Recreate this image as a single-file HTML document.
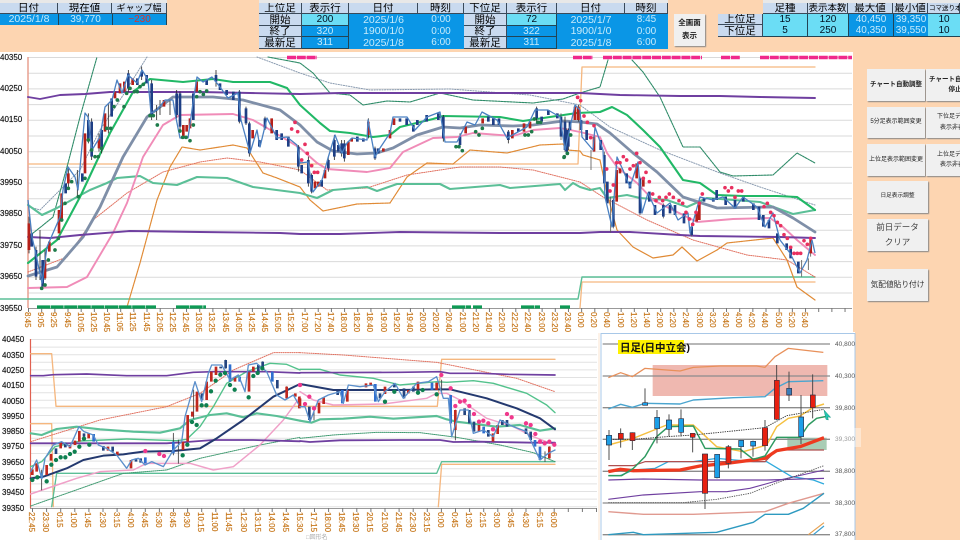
<!DOCTYPE html>
<html lang="ja"><head><meta charset="utf-8"><title>Chart</title>
<style>
html,body{margin:0;padding:0}
body{width:960px;height:540px;overflow:hidden;background:#FDD5B1;position:relative;font-family:"Liberation Sans","Noto Sans CJK JP",sans-serif}
#w{position:absolute;left:0;top:0;width:960px;height:540px;filter:blur(.35px)}
.c{position:absolute;text-align:center;box-sizing:border-box;white-space:nowrap;font-size:10px;overflow:hidden}
.h{background:#C9DAEF;color:#000;border:1px solid #3a4a5a;border-width:0 1px 1px 0;font-size:10.5px}
.b{background:#0A96E6;color:#C6EBFB}
.k{background:#6BDDF5;color:#012}
.d{font-size:10.5px}
.btn{position:absolute;background:#F0F0F0;box-shadow:1px 1px 1px #888;text-align:center;display:flex;align-items:center;justify-content:center;line-height:1.35;color:#222;box-sizing:border-box;overflow:hidden;white-space:nowrap}
svg{position:absolute;left:0;top:0}
svg text{font-family:"Liberation Sans",sans-serif}
</style></head><body><div id="w">

<div class="c" style="left:0;top:0;width:167px;height:3px;background:#E8E8E8"></div>
<div class="c" style="left:259px;top:0;width:409px;height:3px;background:#E8E8E8"></div>
<div class="c" style="left:763px;top:0;width:197px;height:3px;background:#E8E8E8"></div>

<div class="c h" style="left:0;top:3px;width:58px;height:11px;line-height:11px">日付</div>
<div class="c h" style="left:58px;top:3px;width:54px;height:11px;line-height:11px">現在値</div>
<div class="c h" style="left:112px;top:3px;width:55px;height:11px;line-height:11px;font-size:9px">ギャップ幅</div>
<div class="c b d" style="left:0;top:14px;width:58px;height:11px;line-height:11px">2025/1/8</div>
<div class="c b" style="left:58px;top:14px;width:54px;height:11px;line-height:11px;border-left:1px solid #245">39,770</div>
<div class="c b" style="left:112px;top:14px;width:55px;height:11px;line-height:11px;color:#D8322E;border-left:1px solid #245;border-right:1px solid #245">−230</div>

<div class="c h" style="left:259px;top:3px;width:43px;height:11px;line-height:11px">上位足</div>
<div class="c h" style="left:302px;top:3px;width:47px;height:11px;line-height:11px">表示行</div>
<div class="c h" style="left:349px;top:3px;width:69px;height:11px;line-height:11px">日付</div>
<div class="c h" style="left:418px;top:3px;width:46px;height:11px;line-height:11px">時刻</div>
<div class="c h" style="left:259px;top:14px;width:43px;height:12px;line-height:12px">開始</div>
<div class="c h" style="left:259px;top:26px;width:43px;height:11px;line-height:11px">終了</div>
<div class="c h" style="left:259px;top:37px;width:43px;height:12px;line-height:12px">最新足</div>
<div class="c k" style="left:302px;top:14px;width:47px;height:12px;line-height:12px;border-right:1px solid #245;border-bottom:1px solid #245">200</div>
<div class="c b" style="left:302px;top:26px;width:47px;height:11px;line-height:11px;border-right:1px solid #245;border-bottom:1px solid #245">320</div>
<div class="c b" style="left:302px;top:37px;width:47px;height:12px;line-height:12px;border-right:1px solid #245;border-bottom:1px solid #245">311</div>
<div class="c b d" style="left:349px;top:14px;width:69px;height:12px;line-height:12px">2025/1/6</div>
<div class="c b d" style="left:349px;top:26px;width:69px;height:11px;line-height:11px">1900/1/0</div>
<div class="c b d" style="left:349px;top:37px;width:69px;height:12px;line-height:12px">2025/1/8</div>
<div class="c b" style="left:418px;top:14px;width:46px;height:12px;line-height:12px">0:00</div>
<div class="c b" style="left:418px;top:26px;width:46px;height:11px;line-height:11px">0:00</div>
<div class="c b" style="left:418px;top:37px;width:46px;height:12px;line-height:12px">6:00</div>

<div class="c h" style="left:464px;top:3px;width:43px;height:11px;line-height:11px">下位足</div>
<div class="c h" style="left:507px;top:3px;width:50px;height:11px;line-height:11px">表示行</div>
<div class="c h" style="left:557px;top:3px;width:68px;height:11px;line-height:11px">日付</div>
<div class="c h" style="left:625px;top:3px;width:43px;height:11px;line-height:11px">時刻</div>
<div class="c h" style="left:464px;top:14px;width:43px;height:12px;line-height:12px">開始</div>
<div class="c h" style="left:464px;top:26px;width:43px;height:11px;line-height:11px">終了</div>
<div class="c h" style="left:464px;top:37px;width:43px;height:12px;line-height:12px">最新足</div>
<div class="c k" style="left:507px;top:14px;width:50px;height:12px;line-height:12px;border-right:1px solid #245;border-bottom:1px solid #245">72</div>
<div class="c b" style="left:507px;top:26px;width:50px;height:11px;line-height:11px;border-right:1px solid #245;border-bottom:1px solid #245">322</div>
<div class="c b" style="left:507px;top:37px;width:50px;height:12px;line-height:12px;border-right:1px solid #245;border-bottom:1px solid #245">311</div>
<div class="c b d" style="left:557px;top:14px;width:68px;height:12px;line-height:12px">2025/1/7</div>
<div class="c b d" style="left:557px;top:26px;width:68px;height:11px;line-height:11px">1900/1/0</div>
<div class="c b d" style="left:557px;top:37px;width:68px;height:12px;line-height:12px">2025/1/8</div>
<div class="c b" style="left:625px;top:14px;width:43px;height:12px;line-height:12px">8:45</div>
<div class="c b" style="left:625px;top:26px;width:43px;height:11px;line-height:11px">0:00</div>
<div class="c b" style="left:625px;top:37px;width:43px;height:12px;line-height:12px">6:00</div>

<div class="btn" style="left:674px;top:14px;width:31px;height:32px;font-size:7.5px;font-weight:bold;line-height:1.7">全画面<br>表示</div>

<div class="c h" style="left:763px;top:3px;width:45px;height:11px;line-height:11px">足種</div>
<div class="c h" style="left:808px;top:3px;width:40px;height:11px;line-height:11px;font-size:9.5px">表示本数</div>
<div class="c h" style="left:848px;top:3px;width:45px;height:11px;line-height:11px">最大値</div>
<div class="c h" style="left:893px;top:3px;width:35px;height:11px;line-height:11px">最小値</div>
<div class="c h" style="left:928px;top:3px;width:32px;height:11px;line-height:11px;font-size:6.5px;text-align:left;padding-left:1px">コマ送り本数</div>
<div class="c h" style="left:718px;top:14px;width:45px;height:11px;line-height:11px">上位足</div>
<div class="c h" style="left:718px;top:25px;width:45px;height:12px;line-height:12px">下位足</div>
<div class="c k" style="left:763px;top:14px;width:45px;height:11px;line-height:11px;border-right:1px solid #245">15</div>
<div class="c k" style="left:808px;top:14px;width:40px;height:11px;line-height:11px">120</div>
<div class="c b" style="left:848px;top:14px;width:45px;height:11px;line-height:11px;border-left:1px solid #245">40,450</div>
<div class="c b" style="left:893px;top:14px;width:35px;height:11px;line-height:11px;border-left:1px solid #245">39,350</div>
<div class="c k" style="left:928px;top:14px;width:32px;height:11px;line-height:11px">10</div>
<div class="c k" style="left:763px;top:25px;width:45px;height:12px;line-height:12px;border-right:1px solid #245;border-bottom:1px solid #245">5</div>
<div class="c k" style="left:808px;top:25px;width:40px;height:12px;line-height:12px;border-bottom:1px solid #245">250</div>
<div class="c b" style="left:848px;top:25px;width:45px;height:12px;line-height:12px;border-left:1px solid #245;border-bottom:1px solid #245">40,350</div>
<div class="c b" style="left:893px;top:25px;width:35px;height:12px;line-height:12px;border-left:1px solid #245;border-bottom:1px solid #245">39,550</div>
<div class="c k" style="left:928px;top:25px;width:32px;height:12px;line-height:12px;border-bottom:1px solid #245">10</div>

<div class="btn" style="left:867px;top:69px;width:58px;height:32px;font-size:6.5px;font-weight:bold">チャート自動調整</div>
<div class="btn" style="left:926px;top:69px;width:58px;height:32px;font-size:6.5px;font-weight:bold;line-height:1.6">チャート自動調整<br>停止</div>
<div class="btn" style="left:867px;top:107px;width:58px;height:31px;font-size:6px">5分足表示範囲変更</div>
<div class="btn" style="left:926px;top:107px;width:58px;height:31px;font-size:6px;line-height:1.7">下位足データ<br>表示非表示</div>
<div class="btn" style="left:867px;top:144px;width:58px;height:32px;font-size:6px">上位足表示範囲変更</div>
<div class="btn" style="left:926px;top:144px;width:58px;height:32px;font-size:6px;line-height:1.7">上位足データ<br>表示非表示</div>
<div class="btn" style="left:867px;top:181px;width:61px;height:32px;font-size:5.7px">日足表示調整</div>
<div class="btn" style="left:867px;top:219px;width:61px;height:32px;font-size:8.5px;line-height:1.75;color:#444">前日データ<br>クリア</div>
<div class="btn" style="left:867px;top:269px;width:61px;height:32px;font-size:7.7px;color:#333">気配値貼り付け</div>

<svg width="960" height="540" viewBox="0 0 960 540" xmlns="http://www.w3.org/2000/svg">
<rect x="0" y="52" width="853" height="280" fill="#fff"/>
<rect x="0" y="332" width="855" height="208" fill="#fff"/>
<rect x="598.5" y="333" width="1" height="207" fill="#FBE6D2"/>

<!-- top chart grid -->
<line x1="440" y1="57" x2="440" y2="309" stroke="#DADADA" stroke-width="824" stroke-dasharray="1 14.7"/>
<line x1="28" y1="57" x2="28" y2="308" stroke="#E8A090" stroke-width="1.5"/>
<line x1="28" y1="308.5" x2="852" y2="308.5" stroke="#999"/>
<line x1="28" y1="310" x2="852" y2="310" stroke="#777" stroke-width="4" stroke-dasharray="1 12.17"/>

<g font-size="8" fill="#111" stroke="#111" stroke-width=".15">
<text x="0" y="60">40350</text><text x="0" y="91">40250</text><text x="0" y="122">40150</text><text x="0" y="154">40050</text><text x="0" y="185">39950</text><text x="0" y="216">39850</text><text x="0" y="248">39750</text><text x="0" y="279">39650</text><text x="0" y="311">39550</text>
</g>

<g fill="none" stroke-linejoin="round" stroke-linecap="round">
<path d="M28 164H578L582 67H815" stroke="#F5B77F" stroke-width="1.3"/>
<path d="M580 308L582 282H815" stroke="#F5B77F" stroke-width="1.3"/>
<path d="M0 299H578L582 277H815" stroke="#5BBF97" stroke-width="1.4"/>
<polyline stroke="#8A9BB0" stroke-width="1" stroke-dasharray="1.2 1.4" points="30,207 40,210 60,190 80,170 100,130 120,100 147,57"/>
<polyline stroke="#8A9BB0" stroke-width="1" stroke-dasharray="1.2 1.4" points="257,57 300,73 330,83 370,90 450,89 530,95 580,105 610,127 660,150 720,173 760,187 815,205"/>
<polyline stroke="#2E8B68" stroke-width="1.1" stroke-dasharray="2 1" points="28,237 42,226 53,217 67,167 80,117 97,57"/>
<polyline stroke="#2E8B68" stroke-width="1.1" stroke-dasharray="2 1" points="268,57 300,63 313,73 330,93 350,95 363,105 387,101 410,102 440,93 473,100 533,103 563,99 580,93 600,87 608,60"/>
<polyline stroke="#2E8B68" stroke-width="1.1" stroke-dasharray="2 1" points="632,60 643,72 660,97 683,147 700,147 720,172 733,176 773,175 797,153 815,163"/>
<polyline stroke="#E0705F" stroke-width="1" stroke-dasharray="1 1.2" points="28,272 67,257 93,220 127,193 163,172 200,162 227,158 260,162 300,170 327,190 367,188 407,175 460,167 500,167 533,170 580,182 603,197 647,220 693,240 747,255 787,260 815,277"/>
<polyline stroke="#E08A35" stroke-width="1.2" stroke-dasharray="1.6 .8" points="127,307 140,263 157,200 170,167 182,147 200,150 233,145 247,148 263,173 277,178 300,187 310,200 323,211 357,204 390,203 407,177 427,163 453,164 470,150 507,153 540,145 563,144 567,150 580,151 583,155 600,160"/>
<polyline stroke="#E08A35" stroke-width="1.2" points="600,160 607,193 617,230 633,247 653,258 673,255 682,247 697,261 717,250"/>
<polyline stroke="#E08A35" stroke-width="1.2" stroke-dasharray="1.6 .8" points="717,250 727,243 773,238"/>
<polyline stroke="#E08A35" stroke-width="1.2" points="773,238 787,260 797,287 815,300"/>
<polyline stroke="#5BBF97" stroke-width="2.1" points="28,205 42,215 57,208 77,197 90,190 107,183 117,178 140,176 153,183 177,185 197,177 227,178 253,187 300,193 317,198 333,190 367,187 377,191 397,184 440,184 450,189 500,185 510,188 560,184 565,190 573,183 580,187 590,190 600,188 607,198 627,195 640,198 667,200 687,207 707,198 760,202 793,214 815,210"/>
<polyline stroke="#F08CB8" stroke-width="1.9" points="28,288 67,287 87,277 113,233 127,203 143,157 163,125 180,115 233,114 253,120 267,128 300,148 317,163 327,169 367,172 390,168 403,152 433,138 457,137 473,133 513,136 533,130 560,128 580,132 600,137 607,153 617,167 637,183 653,200 673,210 697,222 733,219 770,218 783,227 797,240 815,255"/>
<polyline stroke="#7F8FA8" stroke-width="2.8" points="28,276 57,267 83,237 100,207 123,157 147,117 173,97 213,97 243,100 280,110 300,125 317,142 333,151 357,154 377,153 393,148 417,135 443,127 460,128 480,125 513,126 533,125 563,121 580,122 597,124 610,133 633,153 657,172 683,197 717,208 773,207 793,218 815,232"/>
<polyline stroke="#21B866" stroke-width="2.1" points="28,263 57,240 80,197 110,133 133,92 150,79 183,82 213,79 233,82 270,82 287,88 300,105 320,123 330,131 350,133 373,137 390,135 400,127 433,119 443,116 500,117 523,121 550,117 577,113 600,112 612,107 627,115 643,130 660,147 683,180 700,183 717,195 743,196 777,196 797,197 815,210"/>
<polyline stroke="#6F3FA0" stroke-width="1.9" points="28,97 40,99 60,95 85,94 110,92 150,92 200,92 250,93 300,94 340,93 400,93 450,93 500,93 560,93 580,93 620,95 680,96 720,96 760,97 815,98"/>
<polyline stroke="#6F3FA0" stroke-width="1.9" points="28,237 50,238 80,235 130,231 200,232 280,233 300,234 340,234 400,232 500,233 580,233 600,232 630,232 680,235 700,236 780,237 815,238"/>
</g>

<!-- top chart candles -->
<g fill="none" transform="translate(0,50) scale(.33333)">
<path stroke="#222" stroke-width="2.4" d="M87 500V610M120 540V690M108 590V690M135 600V690M205 350V410M232 360V440M265 190V280M275 205V330M297 250V305M305 235V310M325 160V250M385 60V125M425 50V90M455 90V210M470 165V210M480 150V195M510 150V195M530 120V205M540 125V240M580 130V210M648 60V110M718 120V220M738 170V225M748 215V320M795 200V240M895 285V365"/>
<path stroke="#B5201A" stroke-width="8" d="M87 520V600M135 630V685M148 575V605M177 480V550M185 430V510M205 370V400M255 250V370M297 265V295M315 190V245M345 125V145M360 100V130M373 95V125M398 85V105M492 150V170M550 225V260M560 225V245M570 205V235M590 95V125M758 240V265M815 205V250"/>
<path stroke="#1E3F85" stroke-width="8" d="M95 550V590M108 600V680M128 630V710M197 400V430M247 370V395M265 210V270M275 215V320M305 240V300M335 145V200M385 70V115M412 85V105M425 65V80M440 75V100M455 100V195M530 130V195M540 130V230M580 130V210M620 90V105M648 75V95M660 100V120M680 120V135M700 125V150M718 125V215M738 175V220M748 220V310M778 270V290M795 205V235M830 240V270M845 250V270M865 260V290M895 290V350"/>
</g>
<g fill="none" transform="translate(300,50) scale(.33333)">
<path stroke="#222" stroke-width="2.4" d="M25 320V410M35 370V430M85 320V365M103 255V330M125 270V320M133 270V335M205 205V265M225 290V330M430 195V275M480 250V295M625 240V280M710 170V215M795 200V305M805 235V300M835 165V215"/>
<path stroke="#B5201A" stroke-width="8" d="M45 395V415M55 395V410M75 360V385M145 275V315M155 265V275M205 215V255M250 295V305M270 240V265M282 205V225M497 230V250M548 205V220M637 240V265M672 220V245M690 215V235M825 180V210M835 170V210"/>
<path stroke="#1E3F85" stroke-width="8" d="M5 345V370M25 330V400M35 375V425M65 390V410M85 330V355M103 270V320M115 285V305M125 280V310M133 280V325M172 260V275M190 265V275M225 295V325M235 295V310M300 205V215M320 205V225M340 225V245M352 210V225M380 195V215M415 190V210M430 200V265M480 260V285M565 200V215M580 205V225M597 205V225M625 245V270M655 235V245M710 175V205M725 200V215M745 180V195M772 190V205M795 215V300M805 240V290"/>
</g>
<g fill="none" transform="translate(560,50) scale(.33333)">
<path stroke="#555" stroke-width="2.4" d="M3 190V270M20 235V310M93 300V360M133 305V410M152 440V548M160 445V535M240 380V495M395 525V560M725 630V680M745 625V660M752 565V620M310 460V505"/>
<path stroke="#B5201A" stroke-width="8" d="M45 170V210M102 260V305M170 360V455M180 355V370M230 340V385M250 385V410M410 485V515M418 460V510M752 570V610"/>
<path stroke="#1E3F85" stroke-width="8" d="M3 200V260M20 240V305M30 215V240M63 210V240M80 240V270M122 270V300M133 315V400M142 395V460M160 450V530M200 370V400M210 395V415M240 385V490M268 425V455M285 465V495M310 465V500M330 465V490M345 465V495M372 490V520M395 530V555M432 445V455M460 445V455M470 420V450M497 440V465M525 450V475M550 440V455M580 460V480M597 470V510M610 495V530M627 510V535M652 550V580M680 580V600M692 590V625M715 635V670"/>
</g>
<polyline fill="none" stroke="#4A80C2" stroke-width="1.3" stroke-linejoin="round" points="28,200 32,237 35,250 42,283 47,247 50,240 60,217 63,190 68,167 75,177 78,190 85,113 88,117 92,150 100,137 105,107 112,100 117,80 122,93 128,75 137,83 142,70 148,80 151,113 157,110 165,100 173,100 175,113 180,138 188,138 193,103 197,77 203,82 212,77 220,87 228,98 238,93 241,120 250,153 257,130 260,147 267,118 277,138 287,137 297,145 300,163 308,162 313,192 322,180 328,158 335,135 342,153 347,143 352,138 367,140 368,120 375,157 380,148 390,133 393,117 407,117 415,130 427,117 440,112 445,142 457,142 467,122 475,125 482,112 497,120 507,138 527,127 535,110 548,110 560,117 565,150 575,105 580,110 582,137 593,150 595,127 603,150 605,197 612,227 617,157 623,170 630,187 638,162 642,213 648,193 657,213 670,203 678,220 688,213 690,233 700,197 713,200 723,197 735,208 743,197 757,207 765,227 773,213 780,240 790,253 800,273 807,260 812,240 815,253"/>

<!-- dots top chart -->
<g fill="none" stroke="#1E7B4A" stroke-linecap="round">
<path transform="translate(0,50) scale(.33333)" stroke-width="11" d="M125 715h0M135 705h0M145 630h0M165 600h0M175 565h0M185 510h0M195 460h0M205 415h0M215 395h0M235 440h0M255 385h0M265 270h0M275 300h0M285 320h0M295 320h0M305 295h0M320 235h0M332 235h0M342 170h0M352 150h0M372 170h0M380 130h0M390 115h0M403 125h0M412 125h0M420 110h0M430 103h0M450 197h0M460 197h0M472 225h0M540 243h0M548 262h0M558 262h0M570 272h0M580 225h0M590 140h0M600 125h0M610 133h0M620 123h0"/>
<path transform="translate(300,50) scale(.33333)" stroke-width="11" d="M468 290h0M477 290h0M487 302h0M527 245h0M537 255h0M547 235h0M675 255h0M685 255h0M695 245h0M703 207h0M713 217h0M722 217h0M792 322h0M802 310h0"/>
<path transform="translate(560,50) scale(.33333)" stroke-width="11" d="M13 320h0M22 310h0M32 255h0"/>
</g>
<g fill="none" stroke="#E8305F" stroke-linecap="round">
<path transform="translate(0,50) scale(.33333)" stroke-width="11" d="M885 217h0M875 237h0M893 245h0"/>
<path transform="translate(300,50) scale(.33333)" stroke-width="11" d="M15 283h0M22 310h0M5 330h0M35 347h0M43 367h0M53 367h0M833 142h0"/>
<path transform="translate(560,50) scale(.33333)" stroke-width="11" d="M53 142h0M62 152h0M72 198h0M82 217h0M102 227h0M92 263h0M140 357h0M150 423h0M160 405h0M170 338h0M180 338h0M190 320h0M200 330h0M210 357h0M220 347h0M230 310h0M240 338h0M250 385h0M258 367h0M268 395h0M278 432h0M288 452h0M298 442h0M308 452h0M318 442h0M328 432h0M340 442h0M357 452h0M368 460h0M378 487h0M388 507h0M398 523h0M408 487h0M418 460h0M427 432h0M495 413h0M505 423h0M515 413h0M525 442h0M535 423h0M545 423h0M612 470h0M622 460h0M632 487h0M642 497h0M652 517h0M662 527h0M672 554h0M682 565h0M692 592h0M702 610h0M712 610h0M722 610h0M732 572h0M742 583h0M752 565h0"/>
</g>

<!-- status marks -->
<path fill="none" stroke="#F0288C" stroke-width="3.4" stroke-dasharray="9 .8" d="M287 57.5H317M573 57.5H593M603 57.5H702M721 57.5H740M760 57.5H852"/>
<path fill="none" stroke="#0E9A55" stroke-width="3.2" stroke-dasharray="13 .6" d="M37 307H156M176 307H206M452 307H471M473 307H482M521 307H540M560 307H570"/>

<!-- top time labels -->
<g font-size="8" fill="#C87A20" stroke="#C87A20" stroke-width=".2">
<text transform="translate(25,312) rotate(90)">8:45</text><text transform="translate(38,312) rotate(90)">9:05</text><text transform="translate(51,312) rotate(90)">9:25</text><text transform="translate(65,312) rotate(90)">9:45</text><text transform="translate(78,312) rotate(90)">10:05</text><text transform="translate(91,312) rotate(90)">10:25</text><text transform="translate(104,312) rotate(90)">10:45</text><text transform="translate(117,312) rotate(90)">11:05</text><text transform="translate(130,312) rotate(90)">11:25</text><text transform="translate(144,312) rotate(90)">11:45</text><text transform="translate(157,312) rotate(90)">12:05</text><text transform="translate(170,312) rotate(90)">12:25</text><text transform="translate(183,312) rotate(90)">12:45</text><text transform="translate(196,312) rotate(90)">13:05</text><text transform="translate(209,312) rotate(90)">13:25</text><text transform="translate(223,312) rotate(90)">13:45</text><text transform="translate(236,312) rotate(90)">14:05</text><text transform="translate(249,312) rotate(90)">14:25</text><text transform="translate(262,312) rotate(90)">14:45</text><text transform="translate(275,312) rotate(90)">15:05</text><text transform="translate(288,312) rotate(90)">15:25</text><text transform="translate(302,312) rotate(90)">17:00</text><text transform="translate(315,312) rotate(90)">17:20</text><text transform="translate(328,312) rotate(90)">17:40</text><text transform="translate(341,312) rotate(90)">18:00</text><text transform="translate(354,312) rotate(90)">18:20</text><text transform="translate(367,312) rotate(90)">18:40</text><text transform="translate(381,312) rotate(90)">19:00</text><text transform="translate(394,312) rotate(90)">19:20</text><text transform="translate(407,312) rotate(90)">19:40</text><text transform="translate(420,312) rotate(90)">20:00</text><text transform="translate(433,312) rotate(90)">20:20</text><text transform="translate(446,312) rotate(90)">20:40</text><text transform="translate(460,312) rotate(90)">21:00</text><text transform="translate(473,312) rotate(90)">21:20</text><text transform="translate(486,312) rotate(90)">21:40</text><text transform="translate(499,312) rotate(90)">22:00</text><text transform="translate(512,312) rotate(90)">22:20</text><text transform="translate(525,312) rotate(90)">22:40</text><text transform="translate(539,312) rotate(90)">23:00</text><text transform="translate(552,312) rotate(90)">23:20</text><text transform="translate(565,312) rotate(90)">23:40</text><text transform="translate(578,312) rotate(90)">0:00</text><text transform="translate(591,312) rotate(90)">0:20</text><text transform="translate(604,312) rotate(90)">0:40</text><text transform="translate(618,312) rotate(90)">1:00</text><text transform="translate(631,312) rotate(90)">1:20</text><text transform="translate(644,312) rotate(90)">1:40</text><text transform="translate(657,312) rotate(90)">2:00</text><text transform="translate(670,312) rotate(90)">2:20</text><text transform="translate(683,312) rotate(90)">2:40</text><text transform="translate(697,312) rotate(90)">3:00</text><text transform="translate(710,312) rotate(90)">3:20</text><text transform="translate(723,312) rotate(90)">3:40</text><text transform="translate(736,312) rotate(90)">4:00</text><text transform="translate(749,312) rotate(90)">4:20</text><text transform="translate(762,312) rotate(90)">4:40</text><text transform="translate(776,312) rotate(90)">5:00</text><text transform="translate(789,312) rotate(90)">5:20</text><text transform="translate(802,312) rotate(90)">5:40</text>
</g>

<!-- lower chart -->
<line x1="314" y1="339" x2="314" y2="509" stroke="#E2E2E2" stroke-width="566" stroke-dasharray="1 6.6"/>
<line x1="30.5" y1="339" x2="30.5" y2="508" stroke="#E06050" stroke-width="1.2"/>
<line x1="30" y1="508.5" x2="597" y2="508.5" stroke="#999"/>
<line x1="32" y1="510" x2="597" y2="510" stroke="#777" stroke-width="4" stroke-dasharray="1 13.1"/>
<g font-size="8" fill="#111" stroke="#111" stroke-width=".15">
<text x="2" y="342">40450</text><text x="2" y="358">40350</text><text x="2" y="373">40250</text><text x="2" y="388">40150</text><text x="2" y="404">40050</text><text x="2" y="419">39950</text><text x="2" y="434">39850</text><text x="2" y="449">39750</text><text x="2" y="465">39650</text><text x="2" y="480">39550</text><text x="2" y="495">39450</text><text x="2" y="511">39350</text>
</g>
<g fill="none" stroke-linejoin="round" stroke-linecap="round" transform="translate(0,330) scale(.33333)">
<path stroke="#F5B77F" stroke-width="4" d="M92 71H155L168 229H900"/>
<path stroke="#F5B77F" stroke-width="4" d="M92 281H155L160 530"/>
<path stroke="#5BBF97" stroke-width="4" d="M155 530L170 430H900"/>
<polyline stroke="#3F9A70" stroke-width="3" stroke-dasharray="3 3" points="92,528 200,490 370,430 500,420 600,385 780,345 900,322"/>
<polyline stroke="#E0705F" stroke-width="3" stroke-dasharray="3 3.6" points="92,335 300,270 500,230 600,190 700,120 820,68 900,68"/>
<polyline stroke="#F0A0C8" stroke-width="4.4" points="92,492 180,462 230,445 300,425 400,420 440,400 570,400 640,420 700,410 780,345 850,270 890,215 900,200"/>
<polyline stroke="#5BBF97" stroke-width="6.4" points="92,310 125,315 170,297 230,290 300,298 400,305 480,308 540,295 570,270 630,255 680,250 730,262 770,250 830,258 900,272"/>
<polyline stroke="#53C28C" stroke-width="4.2" points="92,410 125,395 165,350 240,333 380,327 530,332 560,328 600,290 640,230 680,160 740,125 810,100 860,103 900,120"/>
<polyline stroke="#6F3FA0" stroke-width="5" points="92,137 130,137 160,134 260,132 380,137 500,137 580,127 640,125 800,125 900,129"/>
<polyline stroke="#6F3FA0" stroke-width="5.4" points="92,340 500,340 560,336 640,330 760,330 900,334"/>
<polyline stroke="#24396F" stroke-width="6" points="92,445 130,440 200,415 250,390 310,377 370,373 430,365 520,363 600,355 650,325 730,270 820,200 900,162"/>
<path stroke="#333" stroke-width="2.4" d="M125 420V480M520 310V375M535 330V400M581 180V265M677 90V115M788 95V120M860 170V205"/>
<path stroke="#C0281F" stroke-width="8" stroke-linecap="butt" d="M97 418V435M110 400V425M140 405V435M153 372V392M182 338V355M210 345V355M225 332V345M238 303V335M266 310V325M324 350V362M352 365V375M393 390V415M549 335V360M563 255V335M577 245V260M591 185V245M620 155V210M634 125V155M648 110V135M705 140V155M747 127V185M760 110V125M860 170V205M886 190V200M898 200V235"/>
<path stroke="#24457F" stroke-width="8" stroke-linecap="butt" d="M168 355V372M196 338V352M252 310V320M310 348V362M338 350V365M408 385V395M422 385V398M606 190V210M662 110V115M677 90V115M775 105V125M788 95V120M832 150V175"/>
<path stroke="#2F6FD0" stroke-width="8" stroke-linecap="butt" d="M125 430V445M281 312V335M436 382V400M520 335V370M690 103V155M719 140V155M817 125V155"/>
<polyline stroke="#5B8FCB" stroke-width="4" points="92,425 110,390 125,445 135,385 160,345 185,335 210,350 237,290 252,305 280,315 295,345 320,355 350,375 380,415 395,390 415,385 435,405 455,395 490,410 520,360 545,335 555,260 565,225 585,155 605,215 625,130 635,105 665,105 690,150 715,135 735,185 745,105 770,100 800,125 830,195 855,210 880,195 900,230"/>
<path stroke="#0E8050" stroke-width="13" d="M97 450h0M112 442h0M140 454h0M154 404h0M168 390h0M182 382h0M196 382h0M210 372h0M224 365h0M238 350h0M252 326h0M268 344h0M548 376h0M562 344h0M576 276h0M590 285h0M605 226h0M619 226h0M633 184h0M647 152h0M661 134h0M675 129h0M690 165h0M704 179h0M746 202h0M760 138h0M773 129h0M787 115h0"/>
<path stroke="#F0388C" stroke-width="13" d="M436 363h0M478 372h0M492 378h0M900 165h0"/>
</g>
<g fill="none" stroke-linejoin="round" stroke-linecap="round" transform="translate(300,330) scale(.33333)">
<path stroke="#F5B77F" stroke-width="4" d="M0 229H412L425 88H765"/>
<path stroke="#F5B77F" stroke-width="4" d="M415 530L425 403H765"/>
<path stroke="#5BBF97" stroke-width="4" d="M0 430H410L425 395H765"/>
<polyline stroke="#3F9A70" stroke-width="3" stroke-dasharray="3 3" points="0,325 100,315 230,307 360,308 470,322 600,345 700,368 765,395"/>
<polyline stroke="#E0705F" stroke-width="3" stroke-dasharray="3 3.6" points="0,68 130,75 410,97 650,145 765,185"/>
<polyline stroke="#F0A0C8" stroke-width="4.4" points="0,185 40,210 100,225 250,222 380,205 410,190 440,190 480,210 560,265 640,290 700,320 765,345"/>
<polyline stroke="#5BBF97" stroke-width="6.4" points="0,272 35,278 60,268 130,266 210,260 280,266 410,258 440,268 470,275 590,290 660,285 720,302 765,295"/>
<polyline stroke="#53C28C" stroke-width="4.2" points="0,118 60,118 120,135 220,145 300,165 410,155 440,157 520,152 580,160 680,190 740,225 765,248"/>
<polyline stroke="#6F3FA0" stroke-width="5" points="0,128 300,127 420,125 450,130 540,130 620,133 765,135"/>
<polyline stroke="#6F3FA0" stroke-width="5.4" points="0,333 30,336 120,331 300,330 420,330 460,336 540,335 700,338 765,338"/>
<polyline stroke="#24396F" stroke-width="6" points="0,162 100,180 200,180 300,180 400,178 450,178 560,205 650,235 720,265 765,298"/>
<path stroke="#333" stroke-width="2.4" d="M42 232V270M466 240V330M735 365V395M748 350V385M425 150V190"/>
<path stroke="#C0281F" stroke-width="8" stroke-linecap="butt" d="M0 205V230M57 218V250M71 203V222M142 180V215M198 160V172M212 158V168M255 170V192M325 180V190M354 155V178M410 158V180M466 240V300M537 285V305M579 310V335M593 285V312M748 350V385"/>
<path stroke="#24457F" stroke-width="8" stroke-linecap="butt" d="M28 230V270M113 183V195M240 190V205M283 160V172M312 175V205M340 170V185M494 235V255M508 240V280M522 275V305M565 300V320M607 270V285M621 270V290M678 295V312M692 305V330"/>
<path stroke="#2F6FD0" stroke-width="8" stroke-linecap="butt" d="M127 180V220M226 162V215M396 158V180M452 195V280M551 290V310M705 330V350M720 350V390"/>
<polyline stroke="#5B8FCB" stroke-width="4" points="0,230 15,230 30,275 55,210 85,195 120,185 130,220 145,165 180,170 220,165 235,215 255,185 285,160 310,205 350,160 385,155 410,140 430,205 445,205 455,320 480,240 505,240 520,310 550,300 580,320 600,270 640,290 680,305 720,390 745,370 765,360"/>
<path stroke="#0E8050" stroke-width="13" d="M255 215h0M283 185h0M354 188h0M368 180h0M410 193h0"/>
<path stroke="#F0388C" stroke-width="13" d="M0 165h0M15 222h0M28 200h0M42 235h0M424 135h0M452 175h0M466 228h0M480 215h0M494 212h0M508 228h0M522 252h0M537 275h0M550 272h0M565 280h0M579 298h0M621 252h0M635 262h0M678 280h0M692 285h0M706 312h0M720 335h0M734 340h0M748 335h0M763 344h0"/>
</g>
<g font-size="8" fill="#C87A20" stroke="#C87A20" stroke-width=".2">
<text transform="translate(29,512) rotate(90)">22:45</text><text transform="translate(43,512) rotate(90)">23:30</text><text transform="translate(57,512) rotate(90)">0:15</text><text transform="translate(71,512) rotate(90)">1:00</text><text transform="translate(85,512) rotate(90)">1:45</text><text transform="translate(100,512) rotate(90)">2:30</text><text transform="translate(114,512) rotate(90)">3:15</text><text transform="translate(128,512) rotate(90)">4:00</text><text transform="translate(142,512) rotate(90)">4:45</text><text transform="translate(156,512) rotate(90)">5:30</text><text transform="translate(170,512) rotate(90)">8:45</text><text transform="translate(184,512) rotate(90)">9:30</text><text transform="translate(198,512) rotate(90)">10:15</text><text transform="translate(212,512) rotate(90)">11:00</text><text transform="translate(226,512) rotate(90)">11:45</text><text transform="translate(241,512) rotate(90)">12:30</text><text transform="translate(255,512) rotate(90)">13:15</text><text transform="translate(269,512) rotate(90)">14:00</text><text transform="translate(283,512) rotate(90)">14:45</text><text transform="translate(297,512) rotate(90)">15:30</text><text transform="translate(311,512) rotate(90)">17:15</text><text transform="translate(325,512) rotate(90)">18:00</text><text transform="translate(339,512) rotate(90)">18:45</text><text transform="translate(353,512) rotate(90)">19:30</text><text transform="translate(367,512) rotate(90)">20:15</text><text transform="translate(382,512) rotate(90)">21:00</text><text transform="translate(396,512) rotate(90)">21:45</text><text transform="translate(410,512) rotate(90)">22:30</text><text transform="translate(424,512) rotate(90)">23:15</text><text transform="translate(438,512) rotate(90)">0:00</text><text transform="translate(452,512) rotate(90)">0:45</text><text transform="translate(466,512) rotate(90)">1:30</text><text transform="translate(480,512) rotate(90)">2:15</text><text transform="translate(494,512) rotate(90)">3:00</text><text transform="translate(508,512) rotate(90)">3:45</text><text transform="translate(523,512) rotate(90)">4:30</text><text transform="translate(537,512) rotate(90)">5:15</text><text transform="translate(551,512) rotate(90)">6:00</text>
</g>
<text x="306" y="539" font-size="6" fill="#aaa" style="font-family:'Liberation Sans','Noto Sans CJK JP',sans-serif">□図形名</text>

<!-- daily chart -->
<rect x="601" y="333.5" width="254" height="207" fill="#fff" stroke="#A8C8E8"/>
<g fill="none" stroke-linejoin="round" transform="translate(600,330) scale(.33333)">
<rect x="158" y="105" width="524" height="93" fill="#EFB8B0"/>
<rect x="562" y="323" width="118" height="37" fill="#A9CDB5"/>
<path stroke="#8C8C8C" stroke-width="4" d="M8 42H690M8 138H690M8 233H690M8 328H690M8 424H690M8 519H690M8 614H690"/>
<polyline stroke="#E8905A" stroke-width="3.8" points="25,143 62,128 97,140 135,115 240,123 280,112 360,108 470,108 495,112 525,80 565,55 670,67"/>
<polyline stroke="#4BA5CF" stroke-width="4.2" points="25,237 62,223 97,232 135,220 240,222 280,210 400,203 495,200 525,175 565,155 670,152"/>
<polyline stroke="#2FAADD" stroke-width="3.8" points="25,437 60,437 100,420 165,415 205,395 280,395 350,385 460,395 500,395 575,440 640,450 672,462"/>
<polyline stroke="#7040A0" stroke-width="3.8" points="25,450 130,447 300,450 500,450 672,445"/>
<polyline stroke="#7040A0" stroke-width="3.4" points="25,508 130,495 300,485 380,485 450,475 540,450 672,420"/>
<polyline stroke="#555" stroke-width="2.8" stroke-dasharray="4 3" points="25,518 250,518 350,508 450,490 540,455 672,407"/>
<polyline stroke="#E09A90" stroke-width="4.2" points="25,545 130,553 280,553 495,545 565,520 672,490"/>
<polyline stroke="#2E9AC0" stroke-width="4.2" points="25,614 100,607 130,614 350,607 460,577 495,553 565,553 610,535 672,490"/>
<path stroke="#E8A050" stroke-width="3.6" d="M625 614L672 578"/><path stroke="#3BA0D0" stroke-width="3.6" d="M640 614L672 588"/>
<polyline stroke="#B05050" stroke-width="3.8" points="25,407 100,407 135,395 495,395 510,380 530,360 600,360 672,360"/>
<polyline stroke="#EE3A20" stroke-width="10" points="25,425 60,418 100,422 240,420 300,408 380,400 495,385 530,362 600,350 672,323"/>
<polyline stroke="#F5C040" stroke-width="4.4" points="25,345 100,325 200,285 280,285 350,350 430,365 500,345 530,290 565,265 600,258 640,232 672,222"/>
<polyline stroke="#2E9A60" stroke-width="4.4" points="25,437 65,437 100,415 135,380 170,320 205,290 280,288 315,355 420,357 460,388 495,378 530,322 600,322 625,285 650,265 685,258"/>
<polyline stroke="#333" stroke-width="2.8" stroke-dasharray="4 3" points="25,328 100,328 200,320 280,315 350,308 495,293 560,257 672,238"/>
<path stroke="#444" stroke-width="2.8" d="M27 300V390M62 295V353M97 307V360M135 175V222M171 240V340M207 253V320M243 238V320M278 310V367M315 372V537M351 372V445M385 345V415M423 330V385M459 332V380M495 270V362M530 105V270M567 125V213M603 195V342M638 133V265"/>
<g stroke="#334" stroke-width="2">
<rect x="19" y="316" width="16" height="29" fill="#1C9FE8"/><rect x="55" y="310" width="15" height="17" fill="#E82010"/><rect x="90" y="308" width="15" height="24" fill="#E82010"/><rect x="128" y="218" width="15" height="8" fill="#1C9FE8"/><rect x="164" y="262" width="15" height="34" fill="#1C9FE8"/><rect x="199" y="270" width="16" height="28" fill="#1C9FE8"/><rect x="236" y="266" width="15" height="41" fill="#1C9FE8"/><rect x="271" y="310" width="14" height="12" fill="#E82010"/><rect x="307" y="372" width="16" height="118" fill="#E82010"/><rect x="344" y="373" width="15" height="70" fill="#1C9FE8"/><rect x="378" y="350" width="15" height="50" fill="#E82010"/><rect x="416" y="331" width="15" height="19" fill="#1C9FE8"/><rect x="452" y="334" width="15" height="14" fill="#1C9FE8"/><rect x="487" y="293" width="16" height="54" fill="#E82010"/><rect x="523" y="151" width="15" height="117" fill="#E82010"/><rect x="560" y="175" width="15" height="20" fill="#3B7CB8"/><rect x="596" y="261" width="15" height="59" fill="#1C9FE8"/><rect x="631" y="195" width="15" height="38" fill="#E82010"/>
</g>
<path d="M672 240L692 262L683 261L685 270L678 268Z" fill="#22C7B0" stroke="#14907E" stroke-width="1.5"/>
</g>
<rect x="618" y="340" width="66" height="14" fill="#FFF200"/>
<text x="620" y="351" font-size="10.5" font-weight="bold" fill="#111" style="font-family:'Liberation Sans','Noto Sans CJK JP',sans-serif">日足(日中立会)</text>
<g font-size="6.5" fill="#555" text-anchor="middle">
<text x="845" y="346">40,800</text><text x="845" y="378">40,300</text><text x="845" y="410">39,800</text><text x="845" y="441">39,300</text><text x="845" y="473">38,800</text><text x="845" y="505">38,300</text><text x="845" y="536">37,800</text>
</g>
<rect x="833" y="428" width="28" height="19" fill="#fff" fill-opacity=".4"/>
</svg>
</div></body></html>
